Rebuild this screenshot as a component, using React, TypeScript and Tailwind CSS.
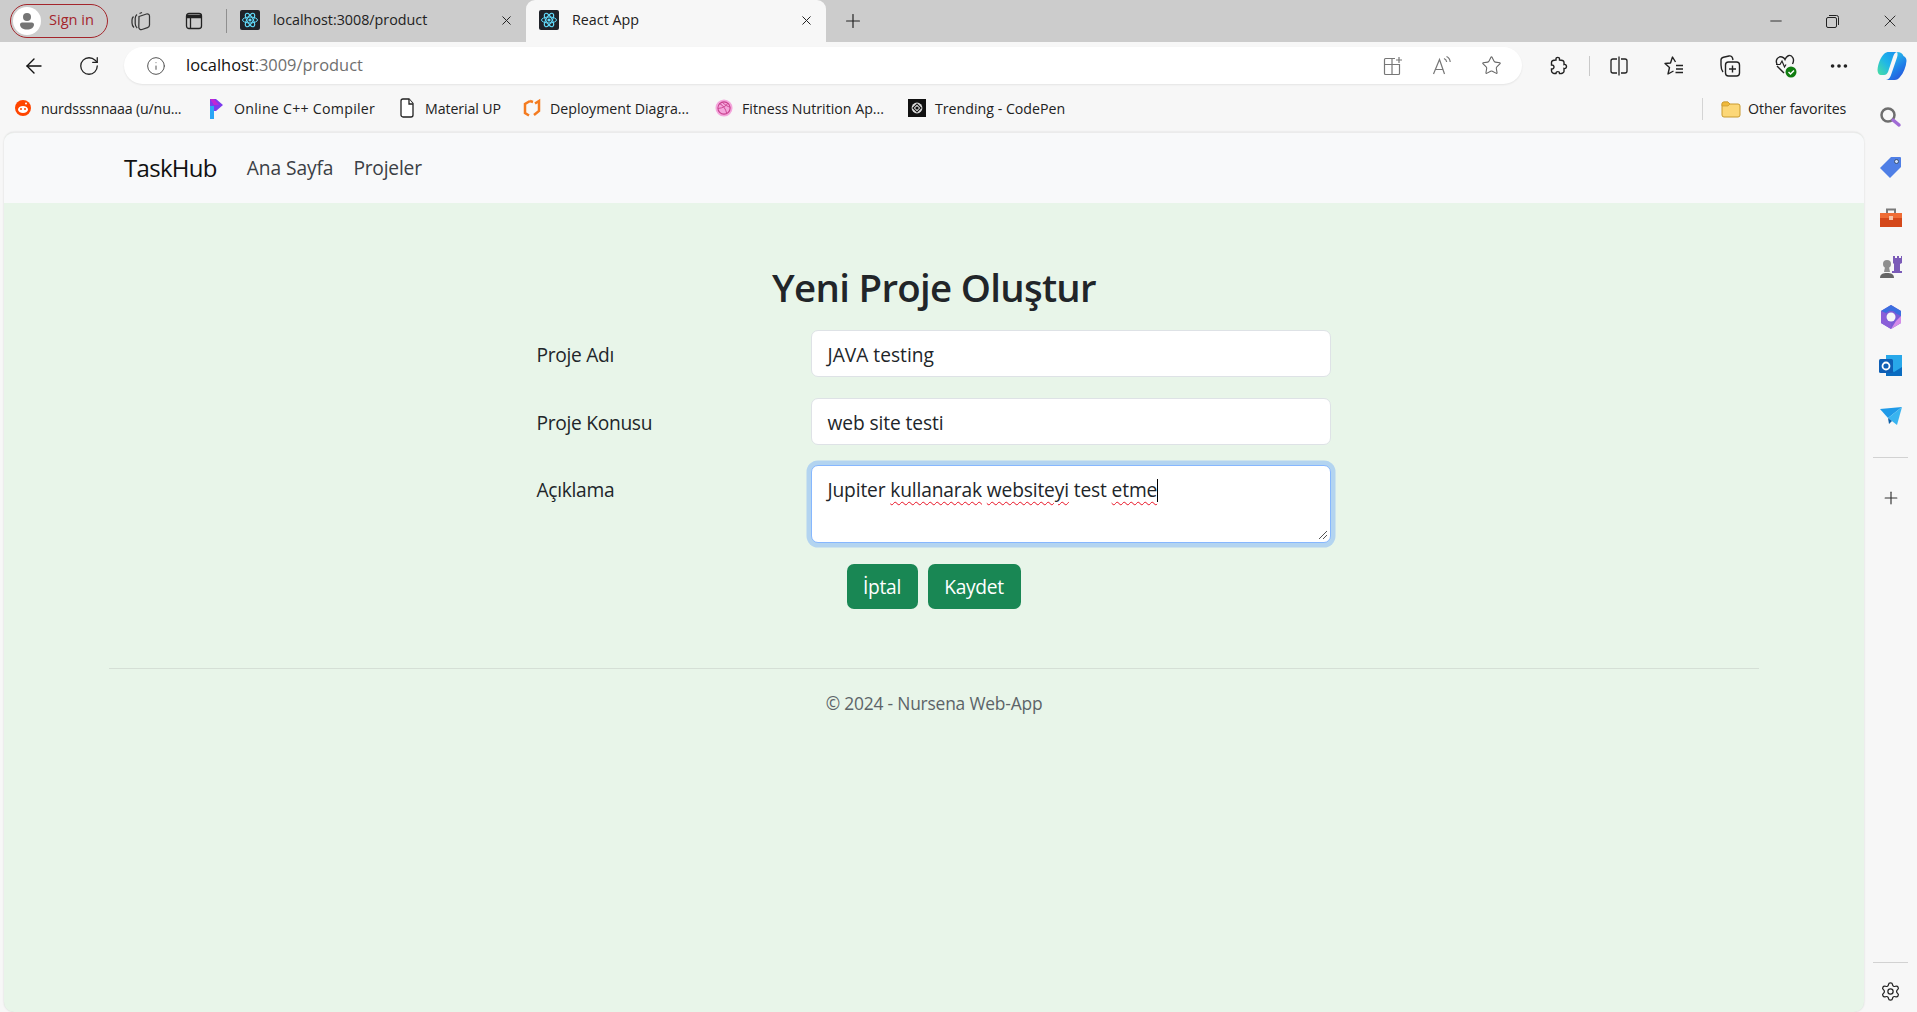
import React from "react";
import { ArrowLeft, RotateCw, Info, X, Plus, Minus, Star, Ellipsis, Settings } from "lucide-react";

const F = { fontFamily: '"Open Sans", "Noto Sans", sans-serif' };

function ReactIcon({ className = "" }: { className?: string }) {
  return (
    <svg viewBox="0 0 20 20" width="20" height="20" className={className}>
      <rect width="20" height="20" rx="2" fill="#20232a" />
      <g fill="none" stroke="#61dafb" strokeWidth="1">
        <ellipse cx="10" cy="10" rx="7.5" ry="3" />
        <ellipse cx="10" cy="10" rx="7.5" ry="3" transform="rotate(60 10 10)" />
        <ellipse cx="10" cy="10" rx="7.5" ry="3" transform="rotate(120 10 10)" />
      </g>
      <circle cx="10" cy="10" r="1.6" fill="#61dafb" />
    </svg>
  );
}

function Tab({ active, title, w }: { active?: boolean; title: string; w: string }) {
  return (
    <div className={`${w} ${active ? "bg-[#f7f7f7] rounded-t-[9px]" : ""} h-[42px] pl-[13px] pr-[12px] pb-[2px] flex items-center shrink-0`}>
      <ReactIcon />
      <span className="ml-[13px] text-[14.3px] text-[#222] flex-1 whitespace-nowrap">{title}</span>
      <X size={15} strokeWidth={1.6} className="text-[#222]" />
    </div>
  );
}

function CollectionsTabs() {
  return (
    <svg width="22" height="22" viewBox="0 0 22 22" fill="none" stroke="#333" strokeWidth="1.25">
      <path d="M3.500 6.500C2.500 7.500 2 8.500 2 10v3c0 1.800.8 3.300 2 4.500" />
      <path d="M7 4.500C5.800 5.500 5.200 6.800 5.200 8.500v5c0 1.800.8 3.400 2 4.500" />
      <path d="M9 6.500 16.500 4c1.500-.4 3 .6 3 2.200V15c0 1.200-.8 2.200-2 2.600L12 19.500c-1.600.5-3.200-.6-3.200-2.200z" />
      <path d="M9.500 3.500 12 2.500" />
    </svg>
  );
}

function VerticalTabs() {
  return (
    <svg width="20" height="20" viewBox="0 0 20 20" fill="none" stroke="#222" strokeWidth="1.3">
      <rect x="2.5" y="2.5" width="15" height="15" rx="2.5" />
      <path d="M3 4.500h14v2H3z" fill="#222" />
      <path d="M6.500 6.500v11" />
    </svg>
  );
}

function Slot({ w, children }: { w: string; children: React.ReactNode }) {
  return <div className={`${w} flex justify-center items-center shrink-0`}>{children}</div>;
}

function Toolbar() {
  return (
    <div className="h-[46px] flex items-start pt-[5px] bg-[#f7f7f7] shrink-0">
      <div className="w-[124px] h-[37px] flex items-center shrink-0">
        <div className="w-[68px] flex justify-center"><ArrowLeft size={24} strokeWidth={1.4} className="text-[#111]" /></div>
        <div className="w-[42px] flex justify-center"><RotateCw size={22} strokeWidth={1.4} className="text-[#222]" /></div>
      </div>
      <div className="w-[1398px] h-[37px] bg-white rounded-full shadow-[0_1px_2px_rgba(0,0,0,0.08)] flex items-center shrink-0">
        <Info size={20} strokeWidth={1.2} className="ml-[22px] text-[#555]" />
        <span className="ml-[20px] text-[16.4px] text-[#111]">localhost<span className="text-[#6f6f6f]">:3009/product</span></span>
        <div className="ml-auto flex items-center gap-[28px] pr-[20px]">
          <svg width="22" height="22" viewBox="0 0 22 22" fill="none" stroke="#777" strokeWidth="1.2">
            <path d="M14 3.500H4.500a1 1 0 0 0-1 1v14a1 1 0 0 0 1 1h13a1 1 0 0 0 1-1V9.500H3.500M11 4v15.500" />
            <path d="M18 2v6M15 5h6" />
          </svg>
          <svg width="22" height="22" viewBox="0 0 22 22" fill="none" stroke="#777" strokeWidth="1.2">
            <path d="M2.500 19 8.500 4.500 13.500 19M4.500 14.500h7.500" />
            <path d="M13 3.500c1.600.6 2.500 2 2.700 3.500M15.500 1.500c2.200 1 3.500 3 3.700 5.500" />
          </svg>
          <Star size={21} strokeWidth={1.2} className="text-[#666]" />
        </div>
      </div>
      <div className="h-[37px] flex-1 flex items-center">
        <div className="w-[67px] pl-[25px] shrink-0">
          <svg width="22" height="22" viewBox="0 0 22 22" fill="none" stroke="#222" strokeWidth="1.4">
            <path d="M9 3.500c0-1.500 3.500-1.500 3.500 0V5c1.500 0 4.500 0 4.500 2.500v2c1.800-.5 2.500 1 2.500 2s-.7 2.500-2.500 2v3c0 1.500-3 2.500-4.500 2 .3-2.500-3.500-2.500-3.500 0-2 .3-4.500-.5-4.500-2.500v-2c1.700.3 2.500-1 2.500-2s-.8-2.300-2.500-2V7.500C4.500 5.500 7 5 9 5z" />
          </svg>
        </div>
        <div className="w-px h-[20px] bg-[#c9c9c9] mr-[3px] shrink-0" />
        <Slot w="w-[52px]">
          <svg width="22" height="22" viewBox="0 0 22 22" fill="none" stroke="#222" strokeWidth="1.3">
            <path d="M9 4H5a2 2 0 0 0-2 2v10a2 2 0 0 0 2 2h4M13 4h4a2 2 0 0 1 2 2v10a2 2 0 0 1-2 2h-4M11 1.500v19" />
          </svg>
        </Slot>
        <Slot w="w-[58px]">
          <svg width="22" height="22" viewBox="0 0 22 22" fill="none" stroke="#222" strokeWidth="1.4" strokeLinejoin="round">
            <path d="M12.500 7 9.500 2 7.500 8 2 8.500l4.500 4L5 19l5.500-3" />
            <path d="M13 10.500h7M13 14h7M12.500 17.500h7.500" />
          </svg>
        </Slot>
        <Slot w="w-[54px]">
          <svg width="24" height="24" viewBox="0 0 24 24" fill="none" stroke="#222" strokeWidth="1.4">
            <rect x="7.500" y="8" width="14" height="14" rx="3" />
            <path d="M14.500 11.500v7M11 15h7" />
            <path d="M5 18C3.500 16 3 14 3 11V6c0-1.500 1-2.500 2.500-2.800L11 2c1.500-.3 3 0 3.500 2l.5 2" />
          </svg>
        </Slot>
        <Slot w="w-[56px]">
          <svg width="26" height="26" viewBox="0 0 26 26" fill="none">
            <path d="M5 11c-2-4 1-8 5-7 1.500.4 2.500 1.500 3 2.500C14 4 18-.5 21 5c1 2 .5 4-.5 6M5 13l7 7" stroke="#222" strokeWidth="1.4" />
            <path d="M4 11.500h4l2-3.500 2.500 6 1.500-2.500" stroke="#222" strokeWidth="1.2" />
            <circle cx="19" cy="19" r="5.500" fill="#107c10" />
            <path d="m16.500 19 2 2 3.500-3.500" stroke="#fff" strokeWidth="1.500" />
          </svg>
        </Slot>
        <Slot w="w-[52px]"><Ellipsis size={22} strokeWidth={2} className="text-[#222]" /></Slot>
        <Slot w="w-[54px]">
          <svg width="30" height="32" viewBox="0 0 30 32">
            <defs>
              <linearGradient id="cp1" x1="0" y1="1" x2="1" y2="0"><stop offset="0" stopColor="#4be0a0" /><stop offset="0.5" stopColor="#1fb6e8" /><stop offset="1" stopColor="#1a8ff0" /></linearGradient>
              <linearGradient id="cp2" x1="0.200" y1="0" x2="0.800" y2="1"><stop offset="0" stopColor="#2ad4e8" /><stop offset="0.600" stopColor="#1f7fe8" /><stop offset="1" stopColor="#2a4fd8" /></linearGradient>
            </defs>
            <path d="M12 2h8c-2 .5-3 2-4 5l-5 15c-1 2-2 3-4 3H4c-2 0-3.500-2-3.500-5C1 13 4 7 7 4c1.500-1.500 3-2 5-2z" fill="url(#cp1)" />
            <path d="M20 2c3.500 0 5.500 1.500 6.500 4 2.500 1 3 3 3 5-.5 6-3 12-6.500 16-1.500 2-3 3-5.500 3H9c2.500-.5 4-2 5-5l5.500-16c1-3 1.500-5 .5-7z" fill="url(#cp2)" />
          </svg>
        </Slot>
      </div>
    </div>
  );
}

function Bm({ w, icon, text, tr = "" }: { w: string; icon: React.ReactNode; text: string; tr?: string }) {
  return (
    <div className={`${w} shrink-0 flex items-center`}>
      <div className="w-[18px] flex justify-center shrink-0">{icon}</div>
      <span className={`ml-[9px] text-[14.2px] ${tr} text-[#222] whitespace-nowrap`}>{text}</span>
    </div>
  );
}

function Bookmarks() {
  return (
    <div className="h-[44px] flex items-center pl-[14px] pb-[3px] bg-[#f7f7f7] shrink-0">
      <Bm w="w-[193px]" text="nurdsssnnaaa (u/nu..." tr="tracking-[-0.15px]" icon={
        <svg width="18" height="18" viewBox="0 0 18 18"><circle cx="9" cy="9" r="8" fill="#ff4500" /><ellipse cx="9" cy="10.500" rx="5" ry="3.500" fill="#fff" /><circle cx="7" cy="10" r="1" fill="#ff4500" /><circle cx="11" cy="10" r="1" fill="#ff4500" /><circle cx="12" cy="4.500" r="1" fill="#fff" /></svg>
      } />
      <Bm w="w-[191px]" text="Online C++ Compiler" tr="tracking-[0.25px]" icon={
        <svg width="16" height="22" viewBox="0 0 16 22"><path d="M2 1h6l7 6-7 6H6v8H2z" fill="#7c3aed" /><path d="M2 8h4v13H2z" fill="#2aa5f5" /><path d="M2 1h4l5 6H6z" fill="#c026d3" /></svg>
      } />
      <Bm w="w-[125px]" text="Material UP" tr="tracking-[-0.1px]" icon={
        <svg width="16" height="20" viewBox="0 0 16 20" fill="#fff" stroke="#222" strokeWidth="1.300"><path d="M2 3a2 2 0 0 1 2-2h6l4 4.500V17a2 2 0 0 1-2 2H4a2 2 0 0 1-2-2z" /><path d="M10 1v5h4" /></svg>
      } />
      <Bm w="w-[192px]" text="Deployment Diagra..." icon={
        <svg width="18" height="20" viewBox="0 0 18 20" fill="none" stroke="#f47b20" strokeWidth="2.500"><path d="M7 3 2 6v9l4 2.500" /><path d="M12 5.500 16 3v10l-5 4" /><path d="M7 3l3 1" /></svg>
      } />
      <Bm w="w-[193px]" text="Fitness Nutrition Ap..." icon={
        <svg width="20" height="20" viewBox="0 0 20 20" fill="none"><circle cx="10" cy="10" r="9.500" fill="#f4a6dc" /><circle cx="10" cy="10" r="6.800" stroke="#c9418f" strokeWidth="1.200" /><path d="M5 5c4 2 7 6 8 11M14.500 4.500C12 8 9 10 3.500 10.500M8 3.500c3 3 6 5 9 5.500" stroke="#c9418f" strokeWidth="1" /></svg>
      } />
      <Bm w="w-[794px]" text="Trending - CodePen" icon={
        <svg width="20" height="20" viewBox="0 0 20 20"><rect width="20" height="20" fill="#111" /><circle cx="10" cy="10" r="6" fill="#ddd" /><path d="m10 5.500 4.500 4.500-4.500 4.500L5.500 10z" fill="none" stroke="#111" strokeWidth="1.200" /><circle cx="10" cy="10" r="1.800" fill="#111" /></svg>
      } />
      <div className="w-px h-[22px] bg-[#d4d4d4] mr-[18px] shrink-0" />
      <svg width="20" height="20" viewBox="0 0 20 20" className="shrink-0"><path d="M1 5a2 2 0 0 1 2-2h4l2 2h8a2 2 0 0 1 2 2v9a2 2 0 0 1-2 2H3a2 2 0 0 1-2-2z" fill="#fcd777" stroke="#c99a2e" /><path d="M1 5a2 2 0 0 1 2-2h4l2 2-2 2H1z" fill="#f0b93a" stroke="#c99a2e" strokeWidth="0.700" /></svg>
      <span className="ml-[7px] text-[14.2px] tracking-[-0.1px] text-[#222] whitespace-nowrap">Other favorites</span>
    </div>
  );
}

function Sidebar() {
  return (
    <div className="w-[53px] shrink-0 flex flex-col items-center">
      <div className="h-[34px] mt-[-34px] flex items-center justify-center shrink-0 pt-[3px] pr-[2px]">
        <svg width="24" height="24" viewBox="0 0 24 24" fill="none">
          <circle cx="10" cy="10" r="6.500" stroke="#6e6e6e" strokeWidth="2.500" />
          <path d="m15 15 6 5" stroke="#a06cd5" strokeWidth="3.500" strokeLinecap="round" />
        </svg>
      </div>
      <div className="mt-[23px] h-[24px]">
        <svg width="24" height="24" viewBox="0 0 24 24"><path d="M12 2h9a1 1 0 0 1 1 1v9L11 23 1 13z" fill="#4f7fe6" /><circle cx="17.500" cy="6.500" r="2" fill="#cfe0ff" stroke="#234" strokeWidth="0.700" /></svg>
      </div>
      <div className="mt-[27px] h-[24px]">
        <svg width="24" height="24" viewBox="0 0 24 24"><path d="M8 7V3.500h8V7" fill="none" stroke="#7a7a7a" strokeWidth="2" /><path d="M1 7h22v5H1z" fill="#ef6c35" /><path d="M1 12h22v9H1z" fill="#d4481a" /><rect x="10" y="10" width="4" height="4" fill="#f7c3a8" /></svg>
      </div>
      <div className="mt-[24px] h-[24px]">
        <svg width="24" height="26" viewBox="0 0 24 26"><circle cx="8" cy="10" r="4" fill="#8f8f8f" /><path d="M6 13h4l1 5H5z" fill="#8f8f8f" /><path d="M1 24c0-4 3-5 7-5s7 1 7 5z" fill="#666" /><path d="M14 2h2v2h2V2h2v2h2V2h1v7l-2 1v7h2v2H13v-2h2v-7l-1-1z" fill="#7b5bb8" /></svg>
      </div>
      <div className="mt-[26px] h-[24px]">
        <svg width="24" height="26" viewBox="0 0 24 26" fill="none">
          <path d="M12 1 22 7v12l-10 6-10-6V7z" fill="#7c5cd6" />
          <path d="M12 1 22 7v5l-5-2.500c-2-3-5-3-7-2.500L7 9 2 7z" fill="#3b6fe0" />
          <path d="M2 7l5 2.500V16l5 3v6L2 19z" fill="#8a5fd8" />
          <path d="M22 12v7l-10 6 5-8z" fill="#d58be8" />
          <circle cx="12" cy="13" r="4.500" fill="#f7f7f7" />
        </svg>
      </div>
      <div className="mt-[26px] h-[24px]">
        <svg width="24" height="24" viewBox="0 0 24 24"><path d="M7 1h16v21H7z" fill="#28a8ea" /><path d="M7 13l8 5 8-5v9H7z" fill="#0a6cc0" /><rect x="0" y="5" width="14" height="14" rx="1.500" fill="#0f5fb5" /><circle cx="7" cy="12" r="3.500" fill="none" stroke="#fff" strokeWidth="1.800" /></svg>
      </div>
      <div className="mt-[26px] h-[24px]">
        <svg width="24" height="24" viewBox="0 0 24 24"><path d="M1 5 23 3 9 14z" fill="#1f9ae8" /><path d="M23 3 18 21 9 14z" fill="#39b4f0" /><path d="M9 14 10 20 13 17z" fill="#0b5ea8" /></svg>
      </div>
      <div className="mt-[29px] w-[35px] h-px bg-[#d2d2d2]" />
      <Plus size={20} strokeWidth={1.4} className="mt-[30px] text-[#333]" />
      <div className="mt-auto w-[35px] h-px bg-[#d2d2d2]" />
      <Settings size={21} strokeWidth={1.4} className="mt-[18px] mb-[10px] text-[#222]" />
    </div>
  );
}

function Field({ label, value, mb, tr }: { label: string; value: string; mb: string; tr: string }) {
  return (
    <div className={`flex items-center ${mb}`}>
      <label className="w-[274px] pt-[3px] text-[19.2px] tracking-[-0.3px] text-[#212529]">{label}</label>
      <div className={`w-[520px] h-[47px] pt-[3px] bg-white border border-[#dee2e6] rounded-[7px] pl-[16px] pr-[15px] flex items-center text-[19.2px] ${tr} text-[#212529]`}>{value}</div>
    </div>
  );
}

function Wavy({ children }: { children: React.ReactNode }) {
  return <span className="underline decoration-wavy decoration-[#e81123] decoration-1 underline-offset-[4px]">{children}</span>;
}

export default function App() {
  return (
    <div style={F} className="w-[1917px] h-[1012px] overflow-hidden flex flex-col bg-[#f7f7f7]">
      <div className="h-[42px] bg-[#cccccc] flex items-center shrink-0">
        <div className="ml-[10px] w-[98px] h-[34px] border border-[#a4262c] rounded-full flex items-center shrink-0 pl-[2px]">
          <div className="w-[28px] h-[28px] rounded-full bg-white flex items-center justify-center shrink-0">
            <svg width="20" height="20" viewBox="0 0 20 20"><circle cx="10" cy="6" r="4" fill="#757575" /><path d="M3 13.500c0-1.500 1.500-2 3-2h8c1.500 0 3 .5 3 2 0 3-3 5-7 5s-7-2-7-5z" fill="#757575" /></svg>
          </div>
          <span className="ml-[8px] pb-[2px] text-[14.6px] text-[#a4262c] whitespace-nowrap">Sign in</span>
        </div>
        <div className="w-[66px] flex justify-center shrink-0"><CollectionsTabs /></div>
        <div className="w-[40px] flex justify-center shrink-0 mr-[12px]"><VerticalTabs /></div>
        <div className="w-px h-[24px] bg-[#8f8f8f] shrink-0" />
        <Tab w="w-[299px]" title="localhost:3008/product" />
        <Tab w="w-[300px]" title="React App" active />
        <Plus size={22} strokeWidth={1.3} className="ml-[16px] text-[#222]" />
        <div className="ml-auto flex items-center">
          <div className="w-[58px] flex justify-center pl-[3px]"><Minus size={18} strokeWidth={1.2} className="text-[#222]" /></div>
          <div className="w-[58px] flex justify-center">
            <svg width="15" height="15" viewBox="0 0 15 15" fill="none" stroke="#222"><rect x="1.500" y="3.500" width="10" height="10" rx="1.500" /><path d="M4 1.500h7.500a2 2 0 0 1 2 2V11" /></svg>
          </div>
          <div className="w-[56px] flex justify-center pl-[2px]"><X size={20} strokeWidth={1.1} className="text-[#222]" /></div>
        </div>
      </div>
      <Toolbar />
      <Bookmarks />
      <div className="flex-1 flex min-h-0 pl-[4px]">
        <main className="w-[1860px] shrink-0 rounded-[10px] overflow-hidden border-t border-[#ebebeb] shadow-[0_0_2px_rgba(0,0,0,0.15)] bg-[#e8f5e9] flex flex-col">
          <nav className="h-[70px] shrink-0 bg-[#f8f9fa] flex items-center pl-[120px]">
            <span className="text-[24px] tracking-[-0.7px] text-[#111]">TaskHub</span>
            <span className="ml-[30px] text-[19.2px] tracking-[-0.1px] text-[#3b4045]">Ana Sayfa</span>
            <span className="ml-[20px] text-[19.2px] tracking-[-0.2px] text-[#3b4045]">Projeler</span>
          </nav>
          <h2 className="mt-[61px] text-center text-[38.4px] leading-[46px] font-semibold tracking-[-0.7px] text-[#212529]">Yeni Proje Oluştur</h2>
          <form className="w-[795px] mx-auto mt-[20px]">
            <Field label="Proje Adı" value="JAVA testing" mb="mb-[21px]" tr="tracking-[0px]" />
            <Field label="Proje Konusu" value="web site testi" mb="mb-[20px]" tr="tracking-[-0.1px]" />
            <div className="flex items-start">
              <label className="w-[274px] text-[19.2px] tracking-[-0.3px] text-[#212529] pt-[11px]">Açıklama</label>
              <div className="w-[520px] h-[78px] relative bg-white border border-[#86b7fe] rounded-[7px] shadow-[0_0_0_4.5px_#b3d4f0] pl-[16px] pr-[15px] pt-[10px] text-[19.2px] tracking-[-0.15px] text-[#212529] whitespace-nowrap">
                Jupiter <Wavy>kullanarak</Wavy> <Wavy>websiteyi</Wavy> test <Wavy>etme</Wavy>
                <span className="inline-block w-px h-[23px] bg-black align-[-5px]" />
                <svg width="10" height="10" viewBox="0 0 10 10" className="absolute right-[2px] bottom-[2px]" stroke="#555" strokeWidth="1"><path d="M9 1 1 9M9 5 5 9" /></svg>
              </div>
            </div>
            <div className="mt-[21px] ml-[310px] flex gap-[10px]">
              <button type="button" className="w-[71px] h-[45px] pt-[2px] bg-[#198754] text-white rounded-[7px] text-[19.2px] tracking-[-0.3px]">İptal</button>
              <button type="button" className="w-[93px] h-[45px] pt-[2px] bg-[#198754] text-white rounded-[7px] text-[19.2px] tracking-[-0.3px]">Kaydet</button>
            </div>
          </form>
          <hr className="mt-[59px] mx-[105px] border-t border-[#d5dfd6]" />
          <footer className="mt-[21px] text-center text-[17.4px] tracking-[-0.2px] text-[#5c6468]">© 2024 - Nursena Web-App</footer>
        </main>
        <Sidebar />
      </div>
    </div>
  );
}
